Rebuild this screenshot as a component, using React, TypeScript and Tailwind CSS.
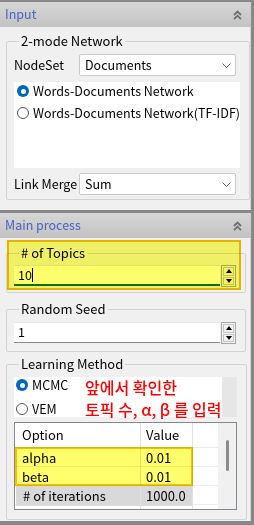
import React from 'react';

const ChevronsUp = () => (
    <svg width="9" height="10" viewBox="0 0 9 10" fill="none" stroke="#6e6e6e" strokeWidth="1.8">
        <path d="M1 5L4.5 1.5L8 5" />
        <path d="M1 9.2L4.5 5.7L8 9.2" />
    </svg>
);

const ChevronDown = () => (
    <svg width="9" height="5" viewBox="0 0 9 5" fill="none" stroke="#5a5a5a" strokeWidth="1">
        <path d="M0.5 0.5L4.5 4.5L8.5 0.5" />
    </svg>
);

function PanelHeader({ title }: { title: string }) {
    return (
        <div className="h-[25px] flex items-center justify-between pl-[5px] pr-[9px] bg-linear-to-b from-[#d6d6d6] to-[#c3c3c3]">
            <span className="text-[12.5px] leading-none text-[#4a62c6]">{title}</span>
            <ChevronsUp />
        </div>
    );
}

function Radio({ checked, label, className }: { checked?: boolean; label: string; className?: string }) {
    return (
        <div className={`flex items-center whitespace-nowrap ${className ?? ''}`}>
            {checked ? (
                <span className="w-[12px] h-[12px] rounded-full bg-[#0067c0] flex items-center justify-center">
                    <span className="w-[5px] h-[5px] rounded-full bg-white" />
                </span>
            ) : (
                <span className="w-[12px] h-[12px] rounded-full border border-[#555] bg-white" />
            )}
            <span className="ml-[4px] leading-none">{label}</span>
        </div>
    );
}

function SelectRow({ label, value, className }: { label: string; value: string; className?: string }) {
    return (
        <div className={`flex items-center h-[22px] whitespace-nowrap ${className ?? ''}`}>
            <span className="w-[65px] leading-none">{label}</span>
            <div className="w-[157px] h-[22px] bg-white border border-[#c9c9c9] rounded-[2px] flex items-center justify-between pl-[5px] pr-[4px]">
                <span className="leading-none">{value}</span>
                <ChevronDown />
            </div>
        </div>
    );
}

function SpinBox({ value, focused }: { value: string; focused?: boolean }) {
    return (
        <div className="flex h-[22px]">
            <div
                className={`w-[206px] h-[21px] bg-white flex items-center pl-[4px] border-t border-[#e4e4e4] ${
                    focused ? 'border-b-2 border-b-[#0f6b45]' : 'border-b border-b-[#8a8a8a]'
                }`}
            >
                <span className="leading-none">{value}</span>
                {focused && <span className="w-[1px] h-[14px] bg-black" />}
            </div>
            <div className="ml-[1px] w-[15px] h-[22px] border border-[#a8a8a8] bg-[#f2f2f2] flex flex-col p-[1px] gap-[1px]">
                <div className="flex-1 border border-[#c4c4c4] flex items-center justify-center">
                    <span className="w-0 h-0 border-l-[3.5px] border-r-[3.5px] border-b-[4px] border-l-transparent border-r-transparent border-b-black" />
                </div>
                <div className="flex-1 border border-[#c4c4c4] flex items-center justify-center">
                    <span className="w-0 h-0 border-l-[3.5px] border-r-[3.5px] border-t-[4px] border-l-transparent border-r-transparent border-t-black" />
                </div>
            </div>
        </div>
    );
}

function Legend({ children }: { children: React.ReactNode }) {
    return <legend className="ml-[5px] px-[2px] leading-[18px] text-[13px]">{children}</legend>;
}

const rows = [
    { option: 'alpha', value: '0.01' },
    { option: 'beta', value: '0.01' },
    { option: '# of iterations', value: '1000.0', selected: true },
];

export default function App() {
    return (
        <div className="w-[254px] h-[525px] bg-[#888888] pt-[2px] pr-[3px] pb-[4px] flex flex-col text-[12.5px] text-black font-['Noto_Sans_CJK_KR','Noto_Sans',sans-serif]">
            <PanelHeader title="Input" />
            <div className="h-[183px] bg-[#f0f0f0] border-r border-[#d6d6d6] pt-[5px] px-[6px]">
                <fieldset className="w-[240px] border border-[#d2d2d2] rounded-[2px] pl-[7px] pr-[9px] pb-[4px]">
                    <Legend>2-mode Network</Legend>
                    <SelectRow label="NodeSet" value="Documents" className="mt-[4px]" />
                    <div className="mt-[6px] h-[86px] bg-white">
                        <Radio checked label="Words-Documents Network" className="h-[18px] pl-[3px]" />
                        <Radio label="Words-Documents Network(TF-IDF)" className="h-[18px] pl-[3px] mt-[4px]" />
                    </div>
                    <SelectRow label="Link Merge" value="Sum" className="mt-[5px]" />
                </fieldset>
            </div>

            <div className="mt-[3px]">
                <PanelHeader title="Main process" />
            </div>
            <div className="flex-1 bg-[#f0f0f0] border-r border-[#d6d6d6] pt-[6px] px-[6px]">
                <div className="relative">
                    <fieldset className="w-[240px] border border-[#d2d2d2] rounded-[2px] pl-[7px] pr-[9px] pb-[5px]">
                        <Legend># of Topics</Legend>
                        <div className="mt-[3px]">
                            <SpinBox value="10" focused />
                        </div>
                    </fieldset>
                    {/* highlight marker */}
                    <div className="absolute left-[1px] top-[-4px] w-[234px] h-[50px] border-2 border-[#f4c000] bg-[#ffff6c] mix-blend-multiply pointer-events-none" />
                </div>

                <fieldset className="mt-[7px] w-[240px] border border-[#d2d2d2] rounded-[2px] pl-[7px] pr-[9px] pb-[7px]">
                    <Legend>Random Seed</Legend>
                    <div className="mt-[4px]">
                        <SpinBox value="1" />
                    </div>
                </fieldset>

                <fieldset className="mt-[3px] w-[240px] border border-[#d2d2d2] rounded-[2px] pl-[7px] pr-[9px] pb-[9px]">
                    <Legend>Learning Method</Legend>
                    <div className="relative mt-[4px] h-[40px] flex">
                        <div className="w-[208px] bg-white">
                            <Radio checked label="MCMC" className="h-[16px] pl-[2px]" />
                            <Radio label="VEM" className="h-[16px] pl-[2px] mt-[8px]" />
                        </div>
                        <div className="w-[15px] bg-[#e6e6e6]" />
                        <div className="absolute left-[71px] top-[-1px] text-[16px] font-medium leading-[22px] text-[#ff0000] whitespace-nowrap">
                            <div>앞에서 확인한</div>
                            <div>토픽 수, α, β 를 입력</div>
                        </div>
                    </div>

                    <div className="mt-[5px] w-[223px] h-[88px] border border-[#828790] bg-white flex text-[13px]">
                        <div className="relative w-[203px]">
                            <div className="grid grid-cols-[126px_52px_25px] h-[25px] border-b border-[#ececec]">
                                <div className="flex items-center pl-[7px] border-r border-[#e2e2e2]">Option</div>
                                <div className="flex items-center pl-[5px] border-r border-[#e2e2e2]">Value</div>
                                <div />
                            </div>
                            {rows.map((row) => (
                                <div key={row.option} className="grid grid-cols-[126px_52px_25px] h-[19px] border-b border-[#ececec]">
                                    <div className={`flex items-center pl-[7px] border-r border-[#e2e2e2] ${row.selected ? 'bg-[#d9d9d9] ml-[1px] pl-[6px]' : ''}`}>
                                        {row.option}
                                    </div>
                                    <div className={`flex items-center pl-[5px] border-r border-[#e2e2e2] ${row.selected ? 'bg-[#d9d9d9]' : ''}`}>
                                        {row.value}
                                    </div>
                                    <div />
                                </div>
                            ))}
                            <div className="grid grid-cols-[126px_52px_25px] h-[4px]">
                                <div className="border-r border-[#e2e2e2]" />
                                <div className="border-r border-[#e2e2e2]" />
                                <div />
                            </div>
                            <div className="absolute left-0 top-[24px] w-[178px] h-[39px] border-2 border-[#f4c000] bg-[#ffff6c] mix-blend-multiply pointer-events-none" />
                        </div>
                        <div className="relative w-[18px] bg-[#f0f0f0]">
                            <div className="absolute left-[8px] top-[17px] w-[3px] h-[31px] rounded-full bg-[#8a8a8a]" />
                        </div>
                    </div>
                </fieldset>
            </div>
        </div>
    );
}
